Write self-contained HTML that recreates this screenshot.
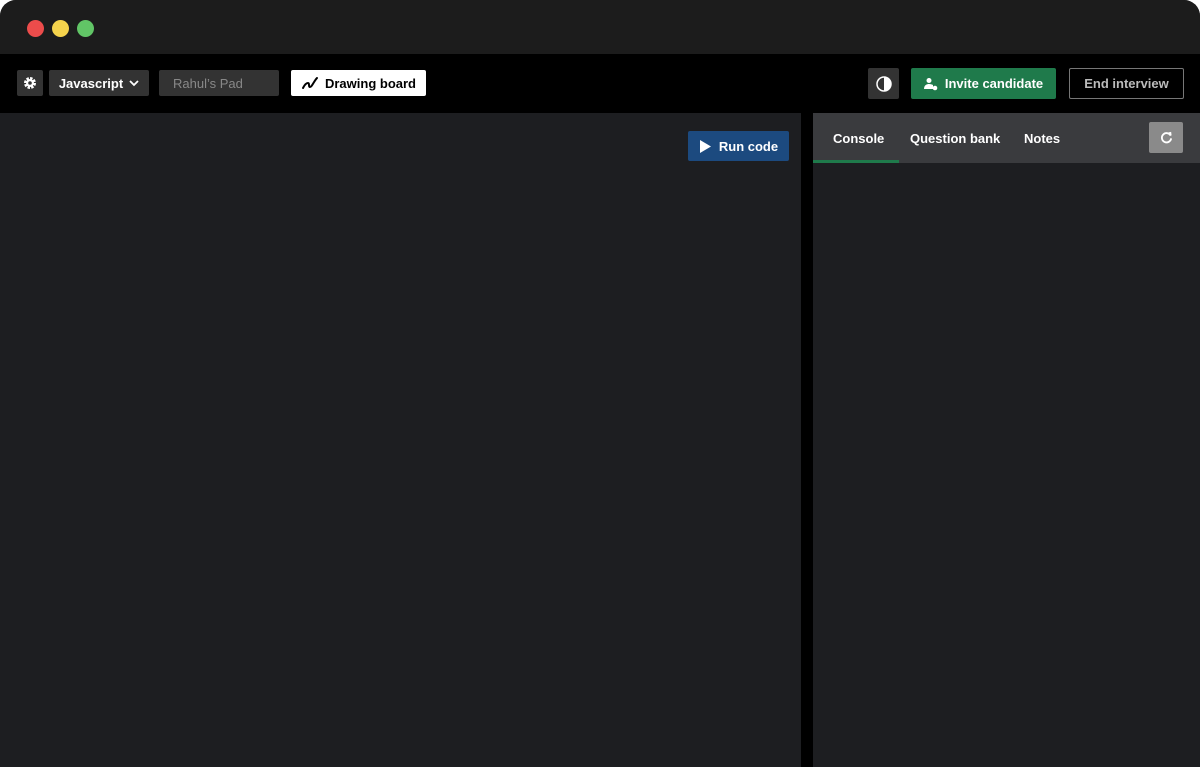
<!DOCTYPE html>
<html><head><style>
*{margin:0;padding:0;box-sizing:border-box}
body{width:1200px;height:767px;background:#fff;font-family:"Liberation Sans",sans-serif;overflow:hidden}
.win{position:absolute;left:0;top:0;width:1200px;height:767px;border-radius:16px 16px 0 0;overflow:hidden;background:#1d1e21}
.title{position:absolute;left:0;top:0;width:1200px;height:54px;background:#1c1c1c}
.dot{position:absolute;top:20px;width:17px;height:17px;border-radius:50%}
.tool{position:absolute;left:0;top:54px;width:1200px;height:59px;background:#000}
.b{position:absolute;display:flex;align-items:center;justify-content:center;font-weight:bold;font-size:13px;color:#fff;border-radius:2px}
.editor{position:absolute;left:0;top:113px;width:801px;height:654px;background:#1d1e21}
.div{position:absolute;left:801px;top:113px;width:12px;height:654px;background:#000}
.right{position:absolute;left:813px;top:113px;width:387px;height:654px;background:#1d1e21}
.tabs{position:absolute;left:0;top:0;width:387px;height:50px;background:#3a3b3e}
.tab{position:absolute;top:18px;font-size:13px;font-weight:bold;color:#fff}
</style></head><body>
<div class="win">
<div class="title">
<div class="dot" style="left:27px;background:#ec4c4b"></div>
<div class="dot" style="left:52px;background:#f5d34c"></div>
<div class="dot" style="left:77px;background:#61c566"></div>
</div>
<div class="tool">
<div class="b" style="left:17px;top:16px;width:26px;height:26px;background:#333">
<svg width="14" height="14" viewBox="0 0 14 14"><circle cx="7" cy="7" r="4.6" fill="none" stroke="#fff" stroke-width="2.8" stroke-dasharray="2.4 1.2"/><circle cx="7" cy="7" r="4" fill="#fff"/><circle cx="7" cy="7" r="1.8" fill="#333"/></svg></div>
<div class="b" style="left:49px;top:16px;width:100px;height:26px;background:#333">Javascript<svg width="10" height="8" viewBox="0 0 10 8" style="margin-left:6px"><path d="M1 2l4 4 4-4" stroke="#fff" stroke-width="1.8" fill="none"/></svg></div>
<div class="b" style="left:159px;top:16px;width:120px;height:26px;background:#333;color:#888;font-weight:normal;justify-content:flex-start;padding-left:14px">Rahul’s Pad</div>
<div class="b" style="left:291px;top:16px;width:135px;height:26px;background:#fff;color:#000">
<svg width="18" height="16" viewBox="0 0 18 16" style="margin-right:6px"><path d="M2 13c1-2 3-5 5-5s0 4 2 4 4-6 7-9" stroke="#000" stroke-width="2" fill="none" stroke-linecap="round"/></svg>Drawing board</div>
<div class="b" style="left:868px;top:14px;width:31px;height:31px;background:#333">
<svg width="16" height="16" viewBox="0 0 16 16"><circle cx="8" cy="8" r="7" stroke="#fff" stroke-width="1.5" fill="none"/><path d="M8 1a7 7 0 010 14z" fill="#fff"/></svg></div>
<div class="b" style="left:911px;top:14px;width:145px;height:31px;background:#1f7a4b">
<svg width="14" height="14" viewBox="0 0 14 14" style="margin-right:7px"><circle cx="5" cy="3.5" r="2.5" fill="#fff"/><path d="M0 12c0-4 3-5 5-5s3 .5 4 1v4z" fill="#fff"/><circle cx="11" cy="11" r="2.3" fill="#fff"/></svg>Invite candidate</div>
<div class="b" style="left:1069px;top:14px;width:115px;height:31px;border:1px solid #777;color:#bbb">End interview</div>
</div>
<div class="editor">
<div class="b" style="left:688px;top:18px;width:101px;height:30px;background:#1c4a7f">
<svg width="12" height="13" viewBox="0 0 12 13" style="margin-right:8px"><path d="M1 0l11 6.5L1 13z" fill="#fff"/></svg>Run code</div>
</div>
<div class="div"></div>
<div class="right">
<div class="tabs">
<div class="tab" style="left:20px">Console</div>
<div class="tab" style="left:97px">Question bank</div>
<div class="tab" style="left:211px">Notes</div>
<div style="position:absolute;left:0;top:47px;width:86px;height:3px;background:#1f7a4b"></div>
<div class="b" style="left:336px;top:9px;width:34px;height:31px;background:#8a8a8a">
<svg width="13" height="13" viewBox="0 0 14 14"><path d="M11.5 5A5 5 0 1 0 12 8" stroke="#fff" stroke-width="2" fill="none"/><path d="M9 1.5l3.5 3.5-0.5-4z" fill="#fff"/></svg></div>
</div>
</div>
</div>
</body></html>
